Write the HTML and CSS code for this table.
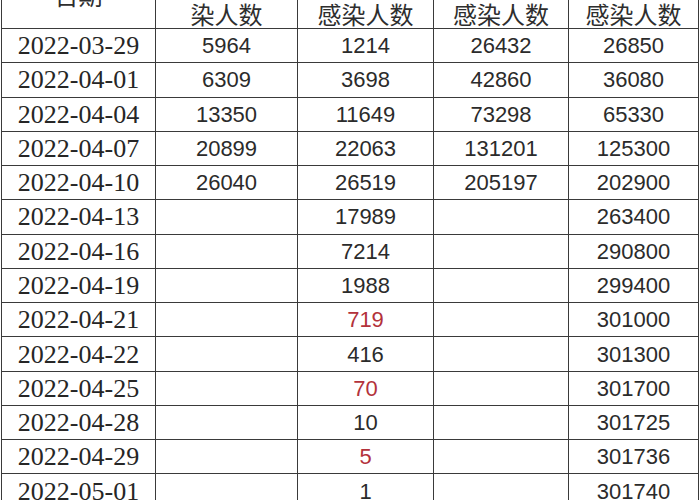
FILE: index.html
```html
<!DOCTYPE html>
<html lang="zh">
<head>
<meta charset="utf-8">
<link rel="stylesheet" href="styles.css">
</head>
<body>
<table class="sheet">
  <colgroup>
    <col class="c-date"><col class="c-a"><col class="c-b"><col class="c-c"><col class="c-d">
  </colgroup>
  <thead>
    <tr class="head">
      <th class="h-date">日期</th>
      <th>染人数</th>
      <th>感染人数</th>
      <th>感染人数</th>
      <th>感染人数</th>
    </tr>
  </thead>
  <tbody>
    <tr><td class="date">2022-03-29</td><td>5964</td><td>1214</td><td>26432</td><td>26850</td></tr>
    <tr><td class="date">2022-04-01</td><td>6309</td><td>3698</td><td>42860</td><td>36080</td></tr>
    <tr><td class="date">2022-04-04</td><td>13350</td><td>11649</td><td>73298</td><td>65330</td></tr>
    <tr><td class="date">2022-04-07</td><td>20899</td><td>22063</td><td>131201</td><td>125300</td></tr>
    <tr><td class="date">2022-04-10</td><td>26040</td><td>26519</td><td>205197</td><td>202900</td></tr>
    <tr><td class="date">2022-04-13</td><td></td><td>17989</td><td></td><td>263400</td></tr>
    <tr><td class="date">2022-04-16</td><td></td><td>7214</td><td></td><td>290800</td></tr>
    <tr><td class="date">2022-04-19</td><td></td><td>1988</td><td></td><td>299400</td></tr>
    <tr><td class="date">2022-04-21</td><td></td><td class="red">719</td><td></td><td>301000</td></tr>
    <tr><td class="date">2022-04-22</td><td></td><td>416</td><td></td><td>301300</td></tr>
    <tr><td class="date">2022-04-25</td><td></td><td class="red">70</td><td></td><td>301700</td></tr>
    <tr><td class="date">2022-04-28</td><td></td><td>10</td><td></td><td>301725</td></tr>
    <tr><td class="date">2022-04-29</td><td></td><td class="red">5</td><td></td><td>301736</td></tr>
    <tr><td class="date">2022-05-01</td><td></td><td>1</td><td></td><td>301740</td></tr>
  </tbody>
</table>
</body>
</html>
```

FILE: styles.css
```css
html, body {
  margin: 0;
  padding: 0;
  background: #ffffff;
  overflow: hidden;
}

.sheet {
  margin: -40px 0 0 1px;
  width: 697px;
  border-collapse: collapse;
  table-layout: fixed;
  color: #2b2b2b;
  font-family: "Liberation Sans", Arial, sans-serif;
  font-size: 22px;
}

.c-date { width: 154px; }
.c-a { width: 142px; }
.c-b { width: 136px; }
.c-c { width: 135px; }
.c-d { width: 130px; }

.sheet th,
.sheet td {
  border: 1px solid #3a3a3a;
  padding: 0;
  text-align: center;
  vertical-align: middle;
  white-space: nowrap;
}

.head th {
  height: 67px;
  font-family: "Noto Sans CJK SC", "Noto Sans", sans-serif;
  font-size: 24px;
  font-weight: 400;
  line-height: 28px;
  color: #2e2e2e;
  vertical-align: bottom;
}

.head .h-date {
  vertical-align: middle;
  line-height: 24px;
}

.sheet tbody tr {
  height: 34.27px;
}

.sheet td {
  height: 33px;
  line-height: 33px;
}

.date {
  font-family: "Liberation Serif", "Times New Roman", serif;
  font-size: 26px;
  color: #262626;
}

.red {
  color: #b3323b;
}
```
